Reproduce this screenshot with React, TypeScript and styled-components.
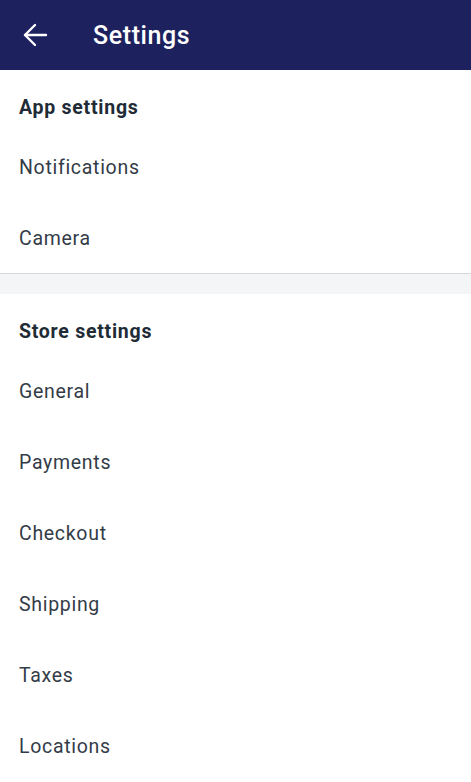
import React from "react";
import styled, { createGlobalStyle } from "styled-components";

const Global = createGlobalStyle`
  html, body { margin: 0; padding: 0; background: #ffffff; }
  body { font-family: Roboto, "Noto Sans", Arial, sans-serif; -webkit-font-smoothing: antialiased; }
`;

const Page = styled.div`
  width: 471px;
  min-height: 782px;
  background: #ffffff;
  display: flex;
  flex-direction: column;
`;

const TopBar = styled.header`
  height: 70px;
  background: #1d225e;
  display: flex;
  align-items: center;
  padding-left: 22px;
  box-sizing: border-box;
`;

const BackButton = styled.button`
  width: 26px;
  height: 26px;
  padding: 0;
  border: 0;
  background: transparent;
  display: flex;
  align-items: center;
  justify-content: center;
  margin-right: 45px;
  cursor: pointer;
`;

const Title = styled.h1`
  margin: 0;
  color: #ffffff;
  font-family: Roboto, sans-serif;
  font-weight: 500;
  font-size: 25px;
  letter-spacing: 0.6px;
`;

const Section = styled.section<{ $divider?: boolean }>`
  background: #ffffff;
  display: flex;
  flex-direction: column;
  ${(p) => (p.$divider ? "border-bottom: 1px solid #d6d7d9; box-shadow: 0 1px 1px rgba(0,0,0,0.06);" : "")}
`;

const Gap = styled.div`
  height: 20px;
  background: #f4f5f7;
`;

const SectionTitle = styled.h2`
  margin: 0;
  padding: 26px 19px 11px;
  font-family: Roboto, sans-serif;
  font-weight: 700;
  font-size: 19.5px;
  line-height: 24px;
  letter-spacing: 0.75px;
  color: #212b36;
`;

const Item = styled.div`
  height: 71px;
  padding: 2px 19px 0;
  display: flex;
  align-items: center;
  font-family: Roboto, sans-serif;
  font-size: 19.5px;
  letter-spacing: 0.7px;
  color: #333c47;
  box-sizing: border-box;
`;

const ArrowIcon = () => (
  <svg width="26" height="26" viewBox="0 0 26 26" fill="none" stroke="#ffffff" strokeWidth="2.4" strokeLinecap="round" strokeLinejoin="round">
    <path d="M24 13H3" />
    <path d="M13 3L3 13l10 10" />
  </svg>
);

const sections = [
  { title: "App settings", items: ["Notifications", "Camera"] },
  { title: "Store settings", items: ["General", "Payments", "Checkout", "Shipping", "Taxes", "Locations"] },
];

export default function App() {
  return (
    <>
      <Global />
      <Page>
        <TopBar>
          <BackButton aria-label="Back">
            <ArrowIcon />
          </BackButton>
          <Title>Settings</Title>
        </TopBar>
        {sections.map((s, i) => (
          <React.Fragment key={s.title}>
            {i > 0 && <Gap />}
            <Section $divider={i === 0}>
              <SectionTitle>{s.title}</SectionTitle>
              {s.items.map((it) => (
                <Item key={it}>{it}</Item>
              ))}
            </Section>
          </React.Fragment>
        ))}
      </Page>
    </>
  );
}
